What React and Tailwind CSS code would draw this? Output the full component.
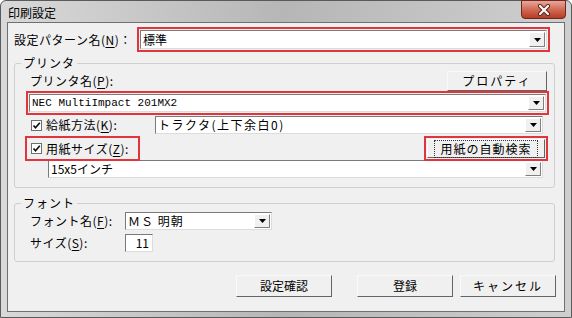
import React from "react";

function Arrow() {
  return (
    <div className="w-[16px] h-full flex items-center justify-center bg-[#f0f0f0] border border-t-white border-l-white border-r-[#808080] border-b-[#808080]">
      <svg width="7" height="4" viewBox="0 0 7 4">
        <path d="M0 0 H7 L3.5 4 Z" fill="#000" />
      </svg>
    </div>
  );
}

function Combo({ text, className = "", textClass = "" }) {
  return (
    <div
      className={
        "flex items-stretch bg-white border border-t-[#7a7a7a] border-l-[#7a7a7a] border-r-[#dcdcdc] border-b-[#dcdcdc] " +
        className
      }
    >
      <div className={"flex-1 flex items-center px-[2px] truncate " + textClass}>
        {text}
      </div>
      <div className="p-[1px]">
        <Arrow />
      </div>
    </div>
  );
}

function Button({ children, className = "" }) {
  return (
    <div
      className={
        "flex items-center justify-center bg-[#f0f0f0] border border-t-[#fafafa] border-l-[#fafafa] border-r-[#646464] border-b-[#646464] " +
        className
      }
    >
      {children}
    </div>
  );
}

function Check() {
  return (
    <div className="w-[11px] h-[11px] bg-white border border-[#6e6e6e] flex items-center justify-center">
      <svg width="9" height="9" viewBox="0 0 9 9">
        <path d="M1.5 4.5 L3.5 6.8 L7.8 1.8" stroke="#111" strokeWidth="1.7" fill="none" />
      </svg>
    </div>
  );
}

function Key({ k }) {
  return <span className="underline underline-offset-2">{k}</span>;
}

export default function App() {
  return (
    <div className="w-[572px] h-[318px] font-[family-name:'Noto_Sans_CJK_JP',sans-serif] text-[12px] text-black leading-none">
      <div className="w-full h-full flex flex-col rounded-t-[6px] border border-[#5a5a5a] bg-gradient-to-r from-[#d9d9d9] via-[#b6b6b6] to-[#cfcfcf]">
        {/* title bar */}
        <div className="h-[21px] flex items-start shrink-0">
          <span className="ml-[7px] mt-[6px] text-[12px]">印刷設定</span>
          <div className="ml-auto mr-[5px] -mt-[1px] w-[45px] h-[19px] rounded-b-[4px] border border-[#6b2a20] bg-gradient-to-b from-[#e7a79a] via-[#d26a55] to-[#b83a24] flex items-center justify-center">
            <svg width="14" height="12" viewBox="0 0 14 12">
              <path d="M3 2 L11 10 M11 2 L3 10" stroke="#5a1c14" strokeWidth="4" strokeLinecap="round" />
              <path d="M3 2 L11 10 M11 2 L3 10" stroke="#fff" strokeWidth="2.2" strokeLinecap="round" />
            </svg>
          </div>
        </div>

        {/* client */}
        <div className="mx-[6px] mb-[5px] h-[290px] border border-[#707070] bg-[#f0f0f0] flex flex-col">
          {/* pattern row */}
          <div className="flex items-center mt-[4px] h-[25px]">
            <span className="w-[129px] pl-[6px] tracking-[0.5px]">
              設定パターン名(<Key k="N" />)：
            </span>
            <div className="w-[413px] h-full border-2 border-[#e0353d] p-[1px]">
              <Combo text="標準" className="h-full" />
            </div>
          </div>

          {/* printer group */}
          <fieldset className="ml-[6px] mr-[9px] mt-[4px] border border-[#cfcfcf] rounded-[3px] pb-[9px]">
            <legend className="ml-[6px] px-[2px] h-[14px] leading-[14px] tracking-[1px]">プリンタ</legend>
            <div className="flex items-center h-[21px]">
              <span className="pl-[15px] tracking-[0.5px]">
                プリンタ名(<Key k="P" />):
              </span>
              <Button className="ml-auto mr-[7px] w-[100px] h-[20px] tracking-[2px]">プロパティ</Button>
            </div>
            <div className="ml-[11px] mr-[5px] h-[24px] border-2 border-[#e0353d] p-[1px]">
              <Combo
                text="NEC MultiImpact 201MX2"
                className="h-full"
                textClass="font-[family-name:'Liberation_Mono',monospace] text-[11px]"
              />
            </div>
            <div className="flex items-center h-[18px] mt-[1px]">
              <div className="ml-[16px]">
                <Check />
              </div>
              <span className="ml-[4px] tracking-[0.5px]">
                給紙方法(<Key k="K" />):
              </span>
              <Combo text="トラクタ(上下余白0)" className="ml-auto mr-[11px] w-[388px] h-full tracking-[1.5px]" />
            </div>
            <div className="flex items-center h-[25px] mt-[2px]">
              <div className="ml-[10px] w-[115px] h-full border-2 border-[#e0353d] flex items-center">
                <div className="ml-[4px]">
                  <Check />
                </div>
                <span className="ml-[4px] tracking-[0.5px]">
                  用紙サイズ(<Key k="Z" />):
                </span>
              </div>
              <div className="ml-auto mr-[6px] w-[124px] h-full border-2 border-[#e0353d] p-[1px]">
                <Button className="w-full h-full">
                  <span className="border border-dotted border-[#333] px-[5px] py-[2px] tracking-[1px]">用紙の自動検索</span>
                </Button>
              </div>
            </div>
            <div className="ml-[33px] mr-[11px] -mt-[1px] h-[18px]">
              <Combo text="15x5インチ" className="h-full" />
            </div>
          </fieldset>

          {/* font group */}
          <fieldset className="ml-[6px] mr-[9px] mt-[8px] border border-[#cfcfcf] rounded-[3px] pb-[9px]">
            <legend className="ml-[6px] px-[2px] h-[14px] leading-[14px] tracking-[1px]">フォント</legend>
            <div className="flex items-center h-[18px] mt-[2px]">
              <span className="w-[110px] pl-[15px] tracking-[0.5px]">
                フォント名(<Key k="F" />):
              </span>
              <Combo text="ＭＳ 明朝" className="w-[147px] h-full tracking-[1px]" />
            </div>
            <div className="flex items-center h-[18px] mt-[4px]">
              <span className="w-[110px] pl-[15px] tracking-[0.5px]">
                サイズ(<Key k="S" />):
              </span>
              <div className="w-[28px] h-full bg-white border border-t-[#7a7a7a] border-l-[#7a7a7a] border-r-[#dcdcdc] border-b-[#dcdcdc] flex items-center justify-end pr-[3px]">
                11
              </div>
            </div>
          </fieldset>

          {/* buttons */}
          <div className="flex justify-end mt-[13px] pr-[8px]">
            <Button className="w-[96px] h-[22px]">設定確認</Button>
            <Button className="w-[96px] h-[22px] ml-[25px]">登録</Button>
            <Button className="w-[96px] h-[22px] ml-[7px] tracking-[2px]">キャンセル</Button>
          </div>
        </div>
      </div>
    </div>
  );
}
